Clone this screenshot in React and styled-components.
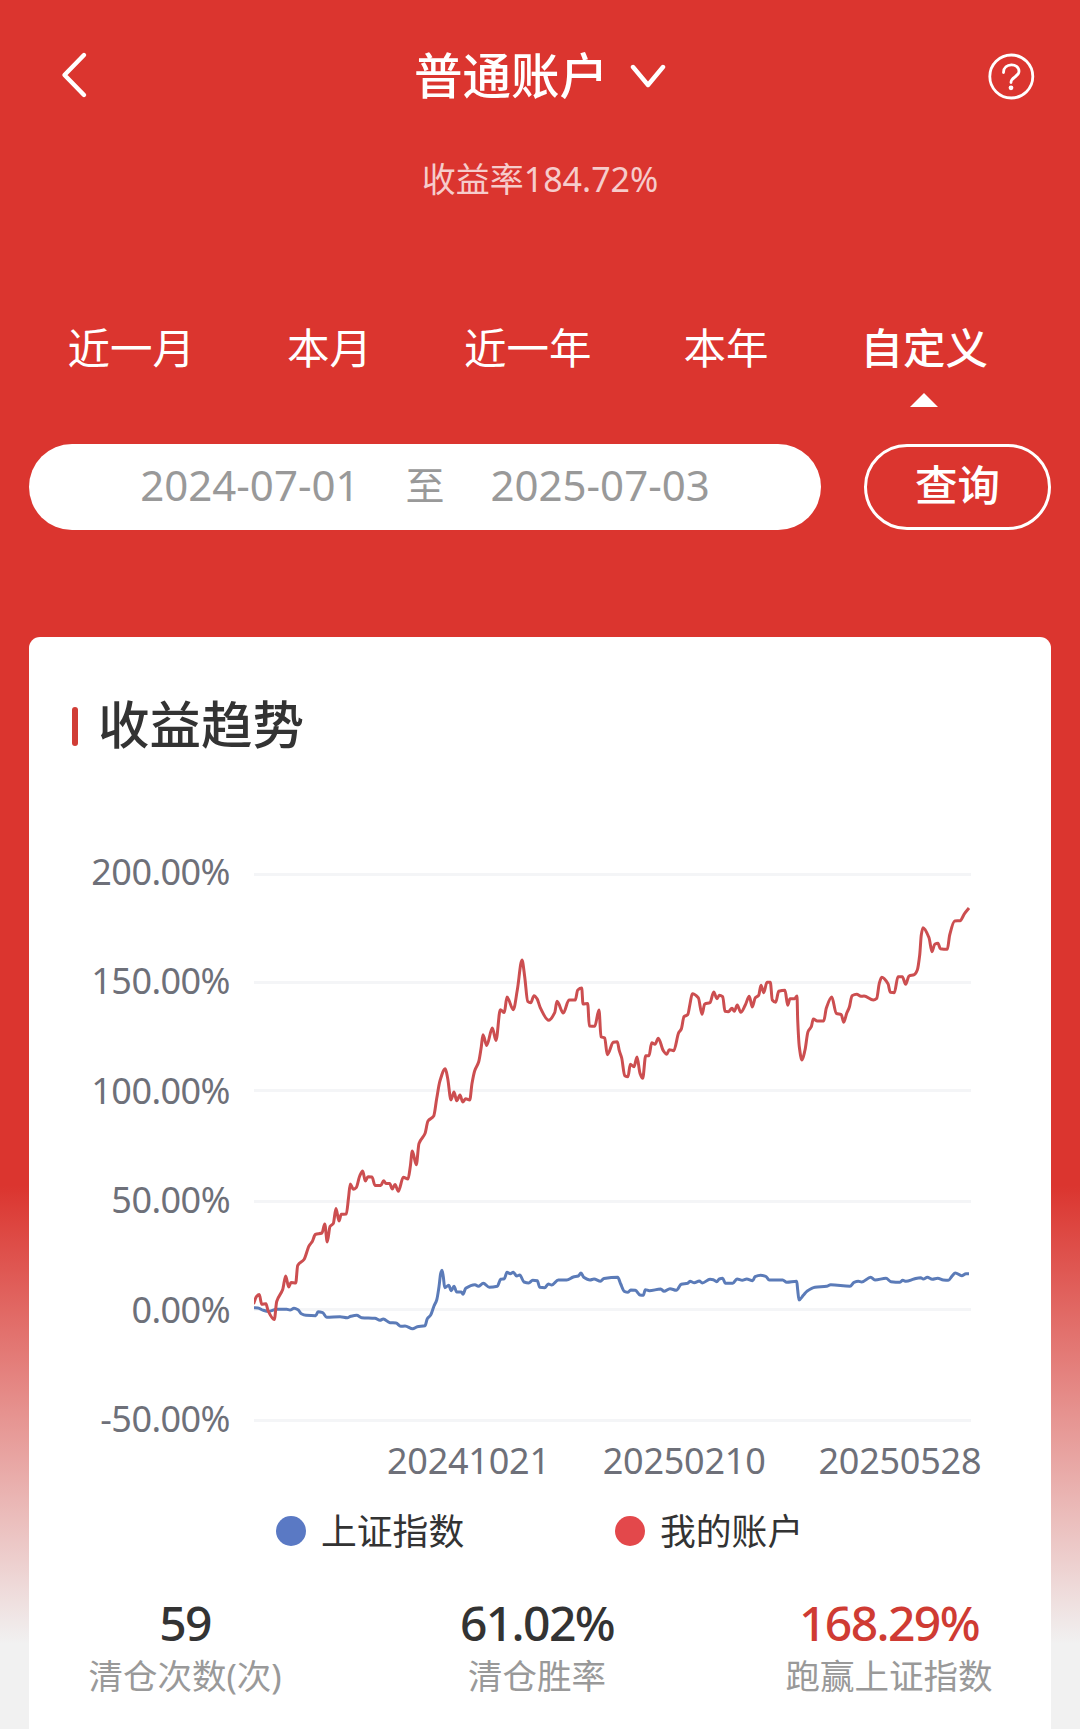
import React from "react";
import styled, { createGlobalStyle } from "styled-components";

const GlobalStyle = createGlobalStyle`
  * { box-sizing: border-box; }
  body {
    margin: 0;
    font-family: "Noto Sans", "Noto Sans CJK SC", sans-serif;
    background: #f1f1f1;
  }
`;

const Page = styled.main`
  width: 1080px;
  height: 1729px;
  overflow: hidden;
  display: flex;
  flex-direction: column;
  padding: 0 29px;
  background: linear-gradient(#db352f 0, #db352f 1186px, #f1f1f1 1644px);
`;

const Header = styled.header`
  display: grid;
  grid-template-columns: 60px 1fr 60px;
  align-items: center;
  height: 72px;
  margin-top: 39px;
  padding: 0 16px 0 30px;
  color: #fff;
`;

const Account = styled.h1`
  display: flex;
  align-items: center;
  justify-content: center;
  gap: 22px;
  margin: 0;
  padding-right: 14px;
  font-size: 48.5px;
  line-height: 72px;
  font-weight: 500;
`;

const Icon = styled.svg`
  display: block;
  fill: none;
  stroke: currentColor;
  justify-self: ${(p) => p.$side || "auto"};
`;

const ReturnRate = styled.p`
  margin: 43px 0 0;
  height: 50px;
  font-size: 34px;
  line-height: 50px;
  text-align: center;
  color: rgba(255, 255, 255, 0.75);
`;

const Tabs = styled.nav`
  display: grid;
  grid-template-columns: repeat(5, 198.3px);
  margin: 114px 0 0 3px;
`;

const Tab = styled.div`
  display: flex;
  flex-direction: column;
  align-items: center;
  gap: 15px;
  height: 89px;
  font-size: 42.5px;
  line-height: 60px;
  font-weight: ${(p) => (p.$active ? 500 : 400)};
  color: #fff;
`;

const Caret = styled.i`
  border: 14px solid transparent;
  border-top: 0;
  border-bottom-color: #fff;
`;

const Query = styled.div`
  display: flex;
  gap: 43px;
  margin-top: 37px;
`;

const Range = styled.div`
  display: flex;
  justify-content: center;
  gap: 46px;
  width: 792px;
  height: 86px;
  border-radius: 43px;
  background: #fff;
  color: #999;
  font-size: 42px;
  line-height: 82px;
`;

const RangeWord = styled.span`
  font-size: 39px;
`;

const QueryButton = styled.button`
  width: 187px;
  height: 86px;
  padding: 0 0 4px;
  border: 3px solid #fff;
  border-radius: 43px;
  background: none;
  color: #fff;
  font: 500 42.5px/76px "Noto Sans", "Noto Sans CJK SC", sans-serif;
`;

const Card = styled.section`
  flex: 1;
  margin-top: 107px;
  border-radius: 11px 11px 0 0;
  background: #fff;
`;

const CardTitle = styled.h2`
  display: flex;
  align-items: center;
  gap: 20px;
  height: 76px;
  margin: 49px 0 0 43px;
  font-size: 51.5px;
  line-height: 76px;
  font-weight: 500;
  color: #333;

  &::before {
    content: "";
    width: 6px;
    height: 39px;
    margin-top: 4px;
    border-radius: 3px;
    background: #d13d36;
  }
`;

const ChartRow = styled.div`
  display: flex;
  gap: 24px;
  margin-top: 90px;
  padding-left: 40px;
  color: #6e7079;
  font-size: 36px;
  line-height: 40px;
`;

const YAxis = styled.div`
  display: flex;
  flex-direction: column;
  justify-content: space-between;
  width: 161px;
  height: 587px;
  letter-spacing: -0.55px;
  text-align: right;
`;

const Plot = styled.svg`
  display: block;
  fill: none;
  stroke-width: 3;
  stroke-linejoin: round;
`;

const XAxis = styled.div`
  display: flex;
  gap: 53px;
  margin: 0 0 0 358px;
  color: #6e7079;
  font-size: 36px;
  line-height: 44px;
  letter-spacing: -0.25px;
`;

const Legend = styled.div`
  display: flex;
  gap: 151px;
  margin: 22px 0 0 247px;
`;

const LegendItem = styled.div`
  display: flex;
  align-items: center;
  gap: 15px;
  width: 188px;
  white-space: nowrap;
  font-size: 35.8px;
  line-height: 52px;
  color: #333;

  &::before {
    content: "";
    flex: none;
    width: 30px;
    height: 30px;
    border-radius: 50%;
    background: ${(p) => p.$color};
  }
`;

const Stats = styled.div`
  display: grid;
  grid-template-columns: repeat(3, 352px);
  margin: 36px 0 0 -20px;
  text-align: center;
`;

const StatValue = styled.div`
  font-size: 48px;
  line-height: 60px;
  font-weight: 500;
  letter-spacing: -1.6px;
  color: ${(p) => (p.$up ? "#cf3b33" : "#333")};
`;

const StatLabel = styled.div`
  margin-top: -1px;
  font-size: 34.5px;
  line-height: 48px;
  color: #999;
`;

const accountPoints = [
  253.5,1304, 256.5,1296.5, 259.3,1294.5, 261.7,1304.3, 266,1303.7, 268,1310.5, 274.3,1319.5, 276.7,1301.5, 282.7,1289.5,
  285.7,1276, 288.7,1287, 291,1282.5, 295.7,1283, 297.7,1265.5, 304,1259.5, 309,1246, 312.3,1241.5, 315.3,1234.5, 322,1233,
  324.7,1224, 327.3,1242, 330,1226.5, 333.3,1223.5, 336,1208.5, 339,1221, 341.3,1214.3, 346.3,1214, 348.5,1198, 350.3,1184,
  353.3,1189.3, 356.3,1187.5, 359.7,1176, 362.7,1171, 365.3,1181, 368,1176.7, 372,1177, 375,1185.5, 380.7,1185.5,
  383.7,1180.7, 386,1183.5, 389.7,1183.5, 392.3,1189, 395,1184.5, 398.3,1191.3, 403.3,1177.3, 408,1179, 410.3,1166.5,
  412.3,1151, 416.3,1164.7, 419,1143.5, 425,1133.5, 428,1121, 433.7,1116, 436.7,1098.5, 440,1080.7, 445.3,1068.7,
  447.7,1078.5, 451,1100, 454,1092, 456.7,1100.7, 460,1095, 462.7,1102, 465.7,1098.7, 469.7,1100, 472,1083.5, 474.7,1070.7,
  478.7,1061.7, 481.3,1046.7, 483,1034.7, 486.7,1045.5, 492.3,1028, 496,1040.5, 500.3,1009.7, 504.3,1012.5, 507,997,
  513.3,1009.7, 517.3,990, 522,960, 524.7,976.7, 527.7,1001.3, 530.7,1002.7, 534,995.7, 537,998.7, 540.3,1007.7,
  548.7,1020.3, 554.7,1012.7, 557,1001.3, 563.3,1013, 569,1000, 575.3,1000, 577.7,990, 581.7,988, 583,1004, 587.7,1003.5,
  589.3,1026, 594.7,1026.3, 599,1010, 601,1036.7, 604.7,1038, 607.3,1054.7, 613.3,1042.3, 617.3,1041.7, 619.3,1050.7,
  621.7,1058, 624.7,1075.7, 628,1076.7, 630.3,1064.3, 634,1066.7, 637,1057, 640,1073.3, 642.7,1078.3, 645.7,1055.7,
  649,1055.7, 651.7,1042.7, 655,1044.3, 658.3,1038.3, 663.3,1050.7, 666.7,1054.3, 669.3,1049.7, 673.7,1050.7,
  678.7,1032.7, 681.3,1029, 684,1016.7, 687.7,1014.7, 690,1004, 692.3,993.7, 698.3,997.7, 702,1014.3, 704.7,1004,
  710,1002.7, 713.7,992, 717,998.7, 719.3,995.3, 722.7,996.7, 725,1011.3, 728.3,1011.7, 732,1008.3, 734.3,1011.3,
  737.3,1005, 740.7,1012.3, 745.3,1005, 749.3,996.3, 752.3,1007, 755.3,997.7, 758.7,995.3, 761,985.3, 763.7,992.7,
  767,982.3, 770.3,982.3, 772.3,1000, 775.7,1002.3, 778.7,991.3, 785,990.3, 787.7,1005.3, 790,998.7, 794.7,998.7, 797,996,
  797.7,1020, 799.3,1046.7, 802,1060, 805,1050, 808,1031.7, 811.3,1026.7, 813.3,1019, 817.3,1021, 823.7,1021,
  826.3,1008.3, 831.7,997, 836.3,1013.3, 841.3,1014.7, 843.7,1022.3, 846.7,1013.3, 849.3,1007.3, 852,995.7, 856.7,994.3,
  861,996.3, 864,996, 873.3,1000, 876.7,998.3, 879.3,983.3, 881.7,977.3, 888,983.7, 890.3,992.3, 894.3,992.7, 898,976.7,
  902.3,976.7, 905.7,984.3, 909,976, 914.3,974.7, 917.3,970, 919.7,955, 921.3,935, 923,927.7, 929,937.7, 932,951.7,
  934.7,944.3, 938,943.3, 940.3,948.7, 947.3,949.3, 949.7,935, 954.7,921, 960,920.7, 964.7,913.3, 969,908,
];

const indexPoints = [
  253.5,1307.7, 258,1308, 263.3,1310.3, 268.3,1311.3, 276.7,1309.3, 286.7,1309.3, 290,1310, 294,1308.3, 298,1309.7,
  301.3,1313.7, 306,1315.3, 315.7,1315.7, 318,1311.7, 322.7,1312.7, 326.7,1317.3, 340,1316.7, 347.3,1317.7, 350.7,1316.3,
  356.7,1315.3, 361.7,1317.7, 375,1318.3, 380,1320.3, 383.3,1319, 390,1322.7, 396,1323, 400.7,1326.3, 405,1326,
  412.7,1328.7, 417.3,1326.7, 425,1325.7, 427.3,1318.7, 430.7,1315, 434,1306, 436.7,1300, 439,1286.7, 440.7,1273.3,
  442,1270.3, 443.3,1276.7, 444.7,1287.7, 448.7,1285.3, 451.3,1290.7, 454,1286.3, 456.7,1292, 461.3,1292, 463,1294.3,
  465.7,1288.3, 475,1284.7, 478.3,1286.3, 483.3,1283.3, 489.3,1287.3, 497.3,1286.3, 500.7,1279.3, 504.3,1278.7,
  507,1272.3, 510.3,1273.7, 513.3,1272.3, 516.7,1276, 519.7,1275, 524,1282, 528.7,1283, 532.7,1280.3, 537.3,1280.7,
  539.7,1287.3, 544.7,1287.7, 548.3,1284, 551.7,1285, 558.3,1280, 566.7,1280, 573.3,1277, 578.3,1276, 581,1273,
  583.7,1277.3, 590,1280, 594,1279, 600.5,1281.2, 604,1278.5, 617.7,1277.3, 620.7,1284, 624.3,1291.3, 628,1292.3,
  630.7,1290, 635.3,1290.3, 640,1295, 643.3,1295.3, 645.3,1289.7, 649.3,1290.7, 660.7,1289, 664,1291.3, 670,1288.7,
  676.3,1290.3, 681.3,1284.3, 687.7,1283.3, 690,1281.3, 694.3,1282.7, 699.3,1281, 702.3,1283, 710,1279.3, 713.3,1279.7,
  716.7,1281.7, 719.3,1279, 722.7,1278.3, 725.3,1283.3, 732.7,1283.3, 737,1279, 742.3,1280.3, 746.7,1279, 752.7,1280.7,
  755,1276.7, 760.7,1275.3, 765.7,1276.3, 769.3,1280, 782.7,1280, 786.7,1282.3, 796.7,1281.3, 797.7,1290, 799,1300,
  803.3,1295.3, 807.3,1291, 815,1287.3, 826.7,1286.3, 830.7,1284.7, 850,1286.3, 854,1282.3, 858.3,1281.3, 861.7,1282,
  870.7,1277.3, 875,1280, 886,1278.3, 891,1281.7, 900,1282.3, 902.7,1280.3, 906,1281.3, 914,1279, 920.7,1277.7,
  923.3,1279, 927.3,1277.3, 932.3,1279.3, 937.7,1278.3, 943.3,1280, 948.3,1280.3, 952.3,1275.7, 955.3,1273, 961.7,1275.7,
  966,1273.7, 969,1273.7,
];

// Monotone cubic interpolation: smooth between samples without overshooting the peaks.
function smoothPath(flat) {
  const n = flat.length / 2;
  const x = (i) => flat[2 * i];
  const y = (i) => flat[2 * i + 1];
  const slope = (i) => (y(i + 1) - y(i)) / (x(i + 1) - x(i));
  const tangent = (i) => {
    if (i === 0) return slope(0);
    if (i === n - 1) return slope(n - 2);
    const a = slope(i - 1);
    const b = slope(i);
    return a * b <= 0 ? 0 : (2 * a * b) / (a + b);
  };
  let d = `M${x(0)} ${y(0)}`;
  for (let i = 0; i < n - 1; i++) {
    const h = (x(i + 1) - x(i)) / 3;
    d += `C${x(i) + h} ${y(i) + h * tangent(i)} ${x(i + 1) - h} ${y(i + 1) - h * tangent(i + 1)} ${x(i + 1)} ${y(i + 1)}`;
  }
  return d;
}

const tabs = ["近一月", "本月", "近一年", "本年", "自定义"];
const yLabels = ["200.00%", "150.00%", "100.00%", "50.00%", "0.00%", "-50.00%"];
const gridLines = [874.5, 982.5, 1090.5, 1201.5, 1309.5, 1420.5];
const xLabels = ["20241021", "20250210", "20250528"];
const stats = [
  { value: "59", label: "清仓次数(次)" },
  { value: "61.02%", label: "清仓胜率" },
  { value: "168.29%", label: "跑赢上证指数", up: true },
];

export default function App() {
  return (
    <>
      <GlobalStyle />
      <Page>
        <Header>
          <Icon width="30" height="48" viewBox="0 0 30 48" strokeWidth="4.4" strokeLinecap="round" strokeLinejoin="round">
            <path d="M25 4 5.500 24 25 44" />
          </Icon>
          <Account>
            普通账户
            <Icon width="36" height="26" viewBox="0 0 36 26" strokeWidth="4.4" strokeLinecap="round" strokeLinejoin="round">
              <path d="M3 5 18 23 33 5" />
            </Icon>
          </Account>
          <Icon $side="end" width="48" height="50" viewBox="0 -2 48 50" strokeWidth="2.8" strokeLinecap="round">
            <circle cx="24.300" cy="24.500" r="21.500" />
            <path d="M16.500 20.500C16.500 10.500 32 10.500 32 19.300 32 25 24 25 24 30.500" />
            <circle cx="24" cy="35.800" r="1" fill="currentColor" />
          </Icon>
        </Header>
        <ReturnRate>收益率184.72%</ReturnRate>

        <Tabs>
          {tabs.map((name, i) => (
            <Tab key={name} $active={i === 4}>
              {name}
              {i === 4 && <Caret />}
            </Tab>
          ))}
        </Tabs>

        <Query>
          <Range>
            <span>2024-07-01</span>
            <RangeWord>至</RangeWord>
            <span>2025-07-03</span>
          </Range>
          <QueryButton>查询</QueryButton>
        </Query>

        <Card>
          <CardTitle>收益趋势</CardTitle>
          <ChartRow>
            <YAxis>
              {yLabels.map((label) => (
                <span key={label}>{label}</span>
              ))}
            </YAxis>
            <Plot width="717" height="587" viewBox="254 852 717 587">
              {gridLines.map((y) => (
                <path key={y} d={`M254 ${y}H971`} stroke="#f4f5f7" />
              ))}
              <path d={smoothPath(indexPoints)} stroke="#5b7bb8" />
              <path d={smoothPath(accountPoints)} stroke="#cc4e50" />
            </Plot>
          </ChartRow>
          <XAxis>
            {xLabels.map((label) => (
              <span key={label}>{label}</span>
            ))}
          </XAxis>
          <Legend>
            <LegendItem $color="#5a79c4">上证指数</LegendItem>
            <LegendItem $color="#e3484b">我的账户</LegendItem>
          </Legend>
          <Stats>
            {stats.map((s) => (
              <div key={s.label}>
                <StatValue $up={s.up}>{s.value}</StatValue>
                <StatLabel>{s.label}</StatLabel>
              </div>
            ))}
          </Stats>
        </Card>
      </Page>
    </>
  );
}
